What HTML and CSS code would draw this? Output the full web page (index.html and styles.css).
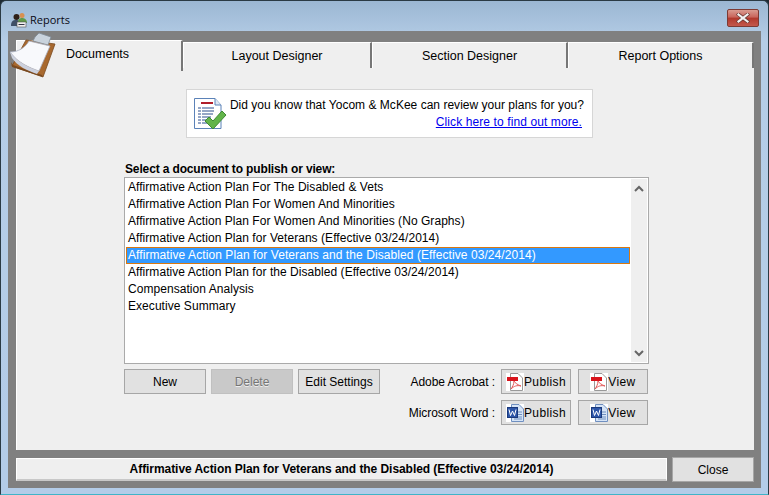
FILE: index.html
```html
<!DOCTYPE html>
<html lang="en">
<head>
<meta charset="utf-8">
<title>Reports</title>
<link rel="stylesheet" href="styles.css">
</head>
<body>
<div class="window">
  <header class="titlebar">
    <svg class="app-icon" width="17" height="16" viewBox="0 0 17 16">
      <circle cx="5.500" cy="5" r="3" fill="#2e2018"/><path d="M0 14c0-5 2-6 5-6s5 1 5 6z" fill="#3f5068"/>
      <circle cx="11" cy="3.500" r="2.500" fill="#d89050"/><path d="M7 11c0-4 2-5 4-5s5 1 5 5z" fill="#5f9a48"/>
      <rect x="6" y="10" width="9" height="5" fill="#f0f0f0" stroke="#555" stroke-width=".6"/>
      <path d="M7.500 12.500h6" stroke="#334" stroke-width="1"/>
    </svg>
    <span class="title">Reports</span>
    <button class="win-close" aria-label="Close window">
      <svg width="14" height="10" viewBox="0 0 14 10"><path d="M2.500 1.500l9 7M11.500 1.500l-9 7" stroke="#6b3a35" stroke-width="3.600" stroke-linecap="square"/><path d="M2.500 1.500l9 7M11.500 1.500l-9 7" stroke="#f2f2f2" stroke-width="2.200" stroke-linecap="square"/></svg>
    </button>
  </header>
  <div class="client">
    <svg class="clipboard" width="50" height="50" viewBox="8 31 50 50">
      <path d="M26 40 L55 44 L43 77 L12 66 Z" fill="#a8692f" stroke="#7a4a20" stroke-width=".8"/>
      <path d="M11 62 L13 65 L42 75 L43 77 L12 67Z" fill="#7a4a20"/>
      <path d="M39 33 L51 37 L48 45 L33 41 L35 37 Z" fill="#c9d3dd" stroke="#7e8a96" stroke-width=".8"/>
      <path d="M29 41 L50 46 L39 71 C30 68 18 63 10 52 C18 52 25 48 29 41Z" fill="#f8f9fc" stroke="#aab0c0" stroke-width=".8"/>
      <path d="M10 52 C18 63 30 68 39 71 L37 74 C28 71 17 66 12 58Z" fill="#ccd1de"/>
    </svg>
    <nav class="tabs">
      <div class="tab active">Documents</div>
      <div class="tab">Layout Designer</div>
      <div class="tab">Section Designer</div>
      <div class="tab">Report Options</div>
    </nav>
    <main class="panel">
      <section class="notice">
        <svg class="notice-icon" width="34" height="34" viewBox="0 0 34 34">
          <path d="M1.500 1.500H22L28 8V31.500H1.500Z" fill="#fff" stroke="#5b82b8" stroke-width="1"/>
          <path d="M22 1.500V8H28" fill="#dfe7f2" stroke="#5b82b8"/>
          <rect x="8" y="5" width="12" height="2" fill="#b01e2a"/>
          <path d="M5 11h17M5 14h17M5 17h15M5 20h13M5 23h10M5 26h9" stroke="#2d4f8e" stroke-width="1.200" stroke-dasharray="3 1 12 1"/>
          <path d="M12 24l4-4 4 4 9-10 4 4-13 14z" fill="#62b44a" stroke="#3f8a34"/>
        </svg>
        <div class="notice-text">
          <p class="notice-line">Did you know that Yocom &amp; McKee can review your plans for you?</p>
          <a class="notice-link" href="#">Click here to find out more.</a>
        </div>
      </section>
      <div class="doc-area">
        <label class="list-label">Select a document to publish or view:</label>
        <div class="list">
          <ul class="items">
            <li>Affirmative Action Plan For The Disabled &amp; Vets</li>
            <li>Affirmative Action Plan For Women And Minorities</li>
            <li>Affirmative Action Plan For Women And Minorities (No Graphs)</li>
            <li>Affirmative Action Plan for Veterans (Effective 03/24/2014)</li>
            <li class="selected">Affirmative Action Plan for Veterans and the Disabled (Effective 03/24/2014)</li>
            <li>Affirmative Action Plan for the Disabled (Effective 03/24/2014)</li>
            <li>Compensation Analysis</li>
            <li>Executive Summary</li>
          </ul>
          <div class="scrollbar">
            <svg width="10" height="7" viewBox="0 0 10 7"><path d="M1 6l4-4 4 4" fill="none" stroke="#666" stroke-width="2"/></svg>
            <svg width="10" height="7" viewBox="0 0 10 7"><path d="M1 1l4 4 4-4" fill="none" stroke="#666" stroke-width="2"/></svg>
          </div>
        </div>
        <div class="actions">
          <div class="left-actions">
            <button class="btn wide">New</button>
            <button class="btn wide disabled">Delete</button>
            <button class="btn wide">Edit Settings</button>
          </div>
          <div class="export-grid">
            <span class="export-label">Adobe Acrobat :</span>
            <button class="btn export"><svg class="file-icon" width="18" height="18" viewBox="0 0 18 18"><rect width="18" height="18" fill="#fff"/><path d="M4.500 .5H12L16.500 5V17.500H4.500Z" fill="#fff" stroke="#999"/><rect x="1" y="4" width="11" height="4" fill="#d8141c"/><path d="M8 8C8 12 6 14 5 16C8 13 11 12 15 13C12 12 9 10 8 8Z" fill="none" stroke="#e25a5a"/></svg>Publish</button>
            <button class="btn export"><svg class="file-icon" width="18" height="18" viewBox="0 0 18 18"><rect width="18" height="18" fill="#fff"/><path d="M4.500 .5H12L16.500 5V17.500H4.500Z" fill="#fff" stroke="#999"/><rect x="1" y="4" width="11" height="4" fill="#d8141c"/><path d="M8 8C8 12 6 14 5 16C8 13 11 12 15 13C12 12 9 10 8 8Z" fill="none" stroke="#e25a5a"/></svg>View</button>
            <span class="export-label">Microsoft Word :</span>
            <button class="btn export"><svg class="file-icon" width="18" height="18" viewBox="0 0 18 18"><rect width="18" height="18" fill="#fff"/><path d="M5.500 .5H13L17.500 5V17.500H5.500Z" fill="#d6e4f6" stroke="#6f8fc0"/><path d="M12 8h4M12 10.500h4M8 13h8M8 15h8" stroke="#6f8fc0"/><rect x="1.500" y="3.500" width="10" height="10" fill="#2c55a8" stroke="#1b3a7c"/><path d="M3 5.500l1.500 6 2-4.500 2 4.500 1.500-6" fill="none" stroke="#fff"/></svg>Publish</button>
            <button class="btn export"><svg class="file-icon" width="18" height="18" viewBox="0 0 18 18"><rect width="18" height="18" fill="#fff"/><path d="M5.500 .5H13L17.500 5V17.500H5.500Z" fill="#d6e4f6" stroke="#6f8fc0"/><path d="M12 8h4M12 10.500h4M8 13h8M8 15h8" stroke="#6f8fc0"/><rect x="1.500" y="3.500" width="10" height="10" fill="#2c55a8" stroke="#1b3a7c"/><path d="M3 5.500l1.500 6 2-4.500 2 4.500 1.500-6" fill="none" stroke="#fff"/></svg>View</button>
          </div>
        </div>
      </div>
    </main>
    <footer class="statusbar">
      <div class="status">Affirmative Action Plan for Veterans and the Disabled (Effective 03/24/2014)</div>
      <button class="btn close">Close</button>
    </footer>
  </div>
</div>
</body>
</html>
```
FILE: styles.css
```css
* { box-sizing: border-box; }
html, body { margin: 0; height: 100%; overflow: hidden; }
body { background: #1d2a33; font-family: "Liberation Sans", Arial, sans-serif; font-size: 12px; color: #000; }
.window {
  width: 769px; height: 495px; position: relative;
  padding: 0 7px 6px;
  border: 1px solid #2a3a44; border-bottom-color: #3fb4c8;
  border-radius: 6px 6px 0 0;
  background: linear-gradient(#9bb7d3 0, #b5cde6 40px, #b3cce8 100%);
  display: flex; flex-direction: column;
}
.titlebar { height: 30px; display: flex; align-items: center; padding: 7px 2px 0 3px; flex: none; }
.app-icon { margin-right: 2px; }
.title { font-family: "Open Sans", sans-serif; font-size: 11px; color: #0a0a14; }
.win-close {
  margin: -4px 0 0 auto; width: 32px; height: 18px; padding: 0; border: 1px solid #7d3a33; border-radius: 2px;
  background: linear-gradient(#d99b90 0, #c9645a 45%, #b1382c 50%, #c3584c 100%);
  display: flex; align-items: center; justify-content: center;
}
.client { flex: 1; background: #808080; padding: 9px 7px 5px 8px; position: relative; display: flex; flex-direction: column; }
.clipboard { position: absolute; left: 0; top: 0; z-index: 2; }
.tabs { display: grid; grid-template-columns: 167px 189px 196px 186px; height: 28px; flex: none; }
.tab {
  margin-top: 2px; background: #efefef; border-top: 1px solid #fff; border-left: 1px solid #fff; border-right: 2px solid #777;
  border-bottom: 1px solid #fff; text-align: center; line-height: 27px; font-size: 12.500px;
}
.tab.active { margin-top: 0; border-bottom: 0; line-height: 26px; padding-right: 3px; position: relative; z-index: 1; }
.panel { height: 382px; background: #efefef; border-left: 1px solid #fff; flex: none; display: flex; flex-direction: column; }
.notice {
  margin: 21px 0 0 169px; width: 407px; height: 49px; background: #fff; border: 1px solid #d6d6d6;
  display: flex; padding: 7px 8px 0 6px; gap: 2px; flex: none;
}
.notice-icon { flex: none; }
.notice-text { flex: 1; display: flex; flex-direction: column; align-items: flex-end; }
.notice-line { margin: 0; line-height: 16px; letter-spacing: .02px; }
.notice-link { color: #0000ee; margin-top: 1px; line-height: 16px; padding-right: 2px; letter-spacing: .1px; }
.doc-area { width: 525px; margin: 23px 0 0 107px; flex: none; }
.list-label { display: block; font-weight: bold; line-height: 16px; padding-left: 1px; letter-spacing: -.14px; }
.list { height: 187px; background: #fff; border: 1px solid #aaa; display: flex; padding: 0 1px; }
.items { list-style: none; margin: 0 1px 0 0; padding: 1px 0 0; flex: 1; min-width: 0; letter-spacing: .05px; }
.items li { height: 17px; line-height: 17px; padding-left: 2px; white-space: nowrap; }
.items li.selected { color: #fff; letter-spacing: .08px; background: #3399ff; border: 1px solid #d9780f; line-height: 15px; padding-left: 1px; }
.scrollbar { width: 16px; margin: 1px 0; flex: none; background: #efefef; display: flex; flex-direction: column; justify-content: space-between; align-items: center; padding: 6px 0 5px; }
.actions { display: flex; justify-content: space-between; margin-top: 5px; }
.left-actions { display: flex; gap: 5px; align-items: flex-start; }
.btn {
  height: 25px; background: #e1e1e1; border: 1px solid #a6a6a6; font: inherit; color: #000; padding: 0;
  display: inline-flex; align-items: center; justify-content: center;
}
.btn.wide { width: 82px; }
.btn.disabled { background: #c9c9c9; color: #757575; text-shadow: 0 1px 0 #eee; border-color: #c0c0c0; }
.export-grid { display: grid; grid-template-columns: 70px 70px; gap: 6px 7px; margin-right: 1px; position: relative; }
.export-label { position: absolute; right: 153px; line-height: 27px; white-space: nowrap; letter-spacing: -.06px; }
.export-label:nth-child(4) { top: 31px; }
.file-icon { flex: none; }
.btn.export { width: 70px; letter-spacing: .4px; }
.statusbar { display: flex; justify-content: space-between; align-items: center; margin-top: 7px; flex: none; }
.status {
  width: 651px; height: 23px; background: #efefef; border: 1px solid #fff; border-bottom: 2px solid #c8c8c8;
  text-align: center; font-weight: bold; line-height: 21px; letter-spacing: -.06px;
}
.btn.close { width: 82px; height: 25px; }
```
